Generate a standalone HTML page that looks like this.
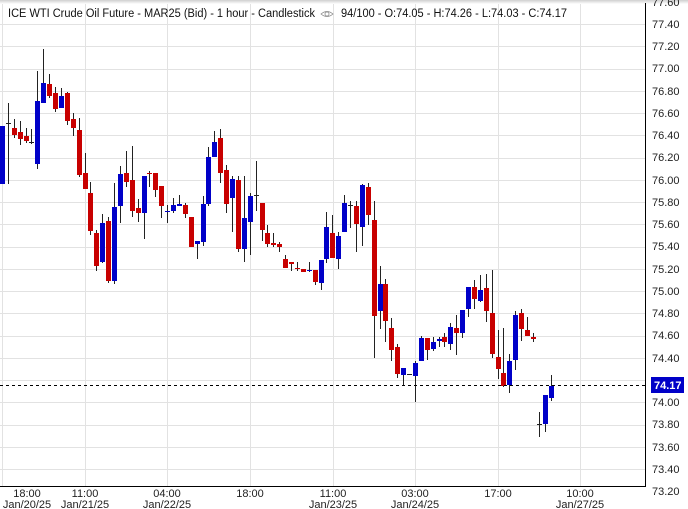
<!DOCTYPE html>
<html><head><meta charset="utf-8"><style>
html,body{margin:0;padding:0;background:#fff;width:688px;height:509px;overflow:hidden}
svg{display:block;font-family:"Liberation Sans",Arial,sans-serif}
</style></head><body>
<svg id="s" width="688" height="509" viewBox="0 0 688 509" xmlns="http://www.w3.org/2000/svg">
<defs><linearGradient id="sh" x1="0" y1="0" x2="0" y2="1"><stop offset="0" stop-color="#cfcfcf"/><stop offset="1" stop-color="#fff"/></linearGradient></defs>
<rect width="688" height="509" fill="#fff"/>
<g id="grid" stroke="#e2e2e2" stroke-width="1"></g>
<g id="c"></g>
<line x1="0" y1="385.5" x2="645" y2="385.5" stroke="#000" stroke-dasharray="3,3"/>
<rect x="0" y="0" width="688" height="4" fill="url(#sh)"/>
<line x1="645.5" y1="3" x2="645.5" y2="487" stroke="#000"/>
<line x1="0" y1="486.5" x2="646" y2="486.5" stroke="#000"/>
<text x="8" y="17" font-size="11.5" fill="#111" textLength="307" lengthAdjust="spacingAndGlyphs">ICE WTI Crude Oil Future - MAR25 (Bid) - 1 hour - Candlestick</text>
<g transform="translate(327,14)" fill="none" stroke="#888" stroke-width="0.8"><path d="M-6 0 Q0 -5 6 0 Q0 5 -6 0Z"/><circle cx="0" cy="0" r="2"/></g>
<text x="341" y="17" font-size="11.5" fill="#111" textLength="226" lengthAdjust="spacingAndGlyphs">94/100 - O:74.05 - H:74.26 - L:74.03 - C:74.17</text>
<g font-size="11" fill="#222">
<text x="652" y="6">77.60</text><text x="652" y="28">77.40</text><text x="652" y="50">77.20</text><text x="652" y="72">77.00</text><text x="652" y="95">76.80</text><text x="652" y="117">76.60</text><text x="652" y="139">76.40</text><text x="652" y="161">76.20</text><text x="652" y="184">76.00</text><text x="652" y="206">75.80</text><text x="652" y="228">75.60</text><text x="652" y="250">75.40</text><text x="652" y="273">75.20</text><text x="652" y="295">75.00</text><text x="652" y="317">74.80</text><text x="652" y="339">74.60</text><text x="652" y="362">74.40</text><text x="652" y="406">74.00</text><text x="652" y="428">73.80</text><text x="652" y="451">73.60</text><text x="652" y="473">73.40</text><text x="652" y="495">73.20</text>
</g>
<rect x="651" y="377" width="33" height="16" fill="#0000c8"/>
<text x="654" y="389" font-size="11" font-weight="bold" fill="#fff">74.17</text>
<g font-size="11" fill="#222" text-anchor="middle">
<text x="27" y="497">18:00</text><text x="27" y="508">Jan/20/25</text>
<text x="85" y="497">11:00</text><text x="85" y="508">Jan/21/25</text>
<text x="167" y="497">04:00</text><text x="167" y="508">Jan/22/25</text>
<text x="250" y="497">18:00</text>
<text x="333" y="497">11:00</text><text x="333" y="508">Jan/23/25</text>
<text x="415" y="497">03:00</text><text x="415" y="508">Jan/24/25</text>
<text x="498" y="497">17:00</text>
<text x="580" y="497">10:00</text><text x="580" y="508">Jan/27/25</text>
</g>
</svg>
<script>
var NS="http://www.w3.org/2000/svg";
function el(p,t,a){var e=document.createElementNS(NS,t);for(var k in a)e.setAttribute(k,a[k]);p.appendChild(e);return e;}
var g=document.getElementById('grid');
[2,85,167,250,333,415,498,580].forEach(function(x){el(g,'line',{x1:x+.5,y1:3,x2:x+.5,y2:486});});
for(var k=0;k<22;k++){var y=Math.round(1.75+k*22.25)+.5;el(g,'line',{x1:0,y1:y,x2:645,y2:y});}
var D=[[2,126,184,126,184,'b'],[8,123,124,103,184,'k'],[14,128,135,119,138,'r'],[20,132,139,121,145,'r'],[26,136,141,128,143,'r'],[31,142,143,129,144,'k'],[37,101,164,71,169,'b'],[43,83,103,49,103,'b'],[49,84,96,74,98,'r'],[55,93,109,87,112,'r'],[61,96,108,88,108,'b'],[67,93,121,92,125,'r'],[73,119,128,113,136,'r'],[79,130,175,118,177,'r'],[85,173,189,153,189,'r'],[90,193,231,182,235,'r'],[96,233,266,230,271,'r'],[102,223,262,214,263,'b'],[108,221,281,217,283,'r'],[114,207,281,183,284,'b'],[120,174,206,166,223,'b'],[126,173,182,151,187,'r'],[132,180,211,146,217,'r'],[138,208,213,199,222,'r'],[144,176,213,176,239,'b'],[149,173,174,171,187,'r'],[155,173,190,173,197,'r'],[161,186,206,186,218,'r'],[167,211,212,205,223,'b'],[173,205,211,198,213,'b'],[179,204,206,195,206,'b'],[185,205,214,203,218,'r'],[191,217,247,217,247,'r'],[197,241,244,241,259,'b'],[203,204,242,196,246,'b'],[208,157,204,147,206,'b'],[214,142,157,131,157,'b'],[220,138,173,129,183,'r'],[226,170,204,165,213,'r'],[232,179,198,176,232,'b'],[238,180,249,176,252,'r'],[244,218,249,176,262,'b'],[250,196,222,193,255,'b'],[256,195,196,161,211,'k'],[262,203,230,203,241,'r'],[267,233,244,225,247,'r'],[273,243,245,233,247,'r'],[279,244,247,242,252,'r'],[285,259,268,255,268,'r'],[291,262,264,262,271,'r'],[297,268,269,262,271,'r'],[303,269,272,269,272,'r'],[309,270,271,262,272,'b'],[315,270,282,270,285,'r'],[321,260,283,260,290,'b'],[326,227,259,212,263,'b'],[332,233,258,215,258,'r'],[338,236,259,232,269,'b'],[344,203,232,195,232,'b'],
[350,205,206,201,228,'k'],[356,206,224,201,252,'r'],[362,185,227,184,246,'b'],[368,187,215,183,225,'r'],[374,220,316,201,358,'r'],[380,284,311,266,329,'b'],[385,284,321,279,342,'r'],[391,328,350,318,361,'r'],[397,347,374,344,378,'r'],[403,368,375,368,385,'b'],[409,374,375,374,375,'k'],[415,363,376,361,402,'b'],[421,338,361,336,361,'b'],[427,338,350,338,360,'r'],[433,342,349,337,351,'b'],[439,339,341,337,347,'b'],[444,337,342,333,347,'r'],[450,327,344,323,350,'b'],[456,328,333,315,355,'r'],[462,310,333,310,338,'b'],[468,287,309,287,317,'b'],[474,287,299,280,309,'r'],[480,290,301,275,302,'b'],[486,288,311,274,322,'r'],[492,313,354,270,358,'r'],[498,357,369,330,379,'r'],[503,373,386,328,387,'r'],[509,361,385,354,393,'b'],[515,315,360,311,370,'b'],[521,313,329,309,341,'r'],[527,330,336,317,336,'r'],[533,337,339,333,342,'r'],
[539,424,425,412,437,'k'],[545,395,424,395,432,'b'],[551,386,398,375,401,'b']];
var c=document.getElementById('c');
var col={r:'#c80000',b:'#0000c8',k:'#222'};
D.forEach(function(d){
 el(c,'line',{x1:d[0]+.5,y1:d[3],x2:d[0]+.5,y2:d[4],stroke:'#222','stroke-width':1});
 var h=Math.max(1,d[2]-d[1]);
 if(d[5]=='k'){el(c,'rect',{x:d[0]-2,y:d[1],width:5,height:1,fill:'#222'});}
 else el(c,'rect',{x:d[0]-2,y:d[1],width:5,height:h,fill:col[d[5]]});
});
</script>
</body></html>
